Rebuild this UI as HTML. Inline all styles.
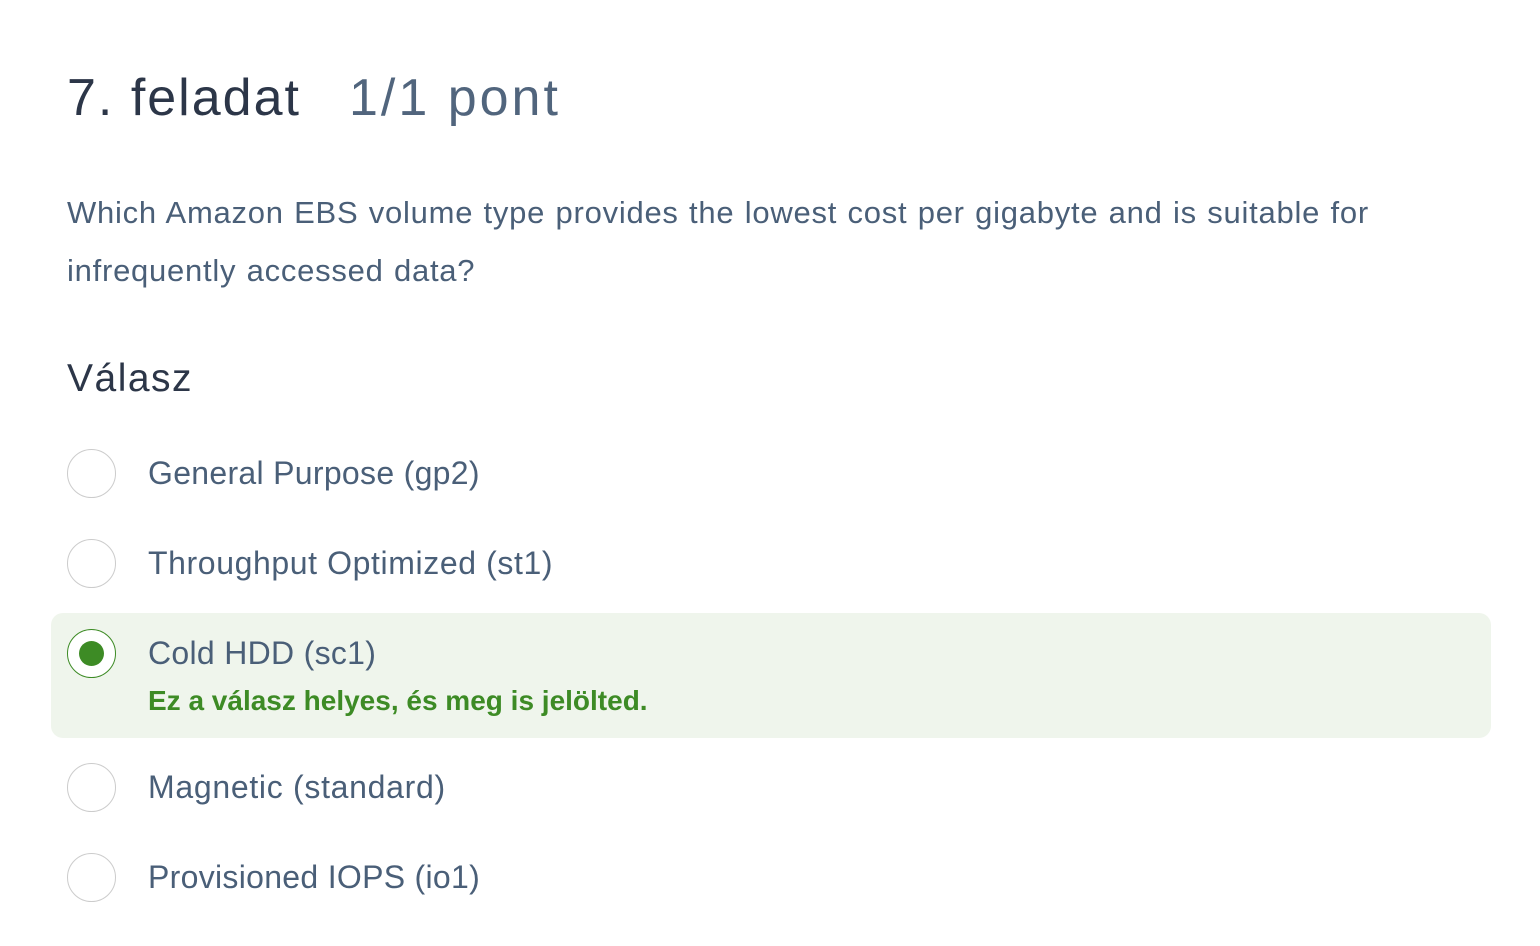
<!DOCTYPE html>
<html><head><meta charset="utf-8"><style>
body{margin:0;width:1540px;height:946px;background:#fff;font-family:"Liberation Sans",sans-serif;position:relative;overflow:hidden}
.a{position:absolute;white-space:nowrap}
h1{position:absolute;left:67px;top:68px;margin:0;font-size:52px;font-weight:normal;color:#2c3648;letter-spacing:2px}
h1 span{color:#51657d;margin-left:48px;letter-spacing:3px}
.q{left:67px;top:184px;font-size:31px;line-height:58px;color:#4a5f78;white-space:normal;width:1400px;letter-spacing:0.75px;word-spacing:1px}
.v{left:67px;top:357px;font-size:39px;color:#2c3648;letter-spacing:1.5px}
.c{position:absolute;left:67px;width:47px;height:47px;border:1.5px solid #ccc;border-radius:50%;background:#fff}
.t{position:absolute;left:148px;font-size:32px;color:#4a5f78;letter-spacing:0.3px}
.box{position:absolute;left:51px;top:613px;width:1440px;height:125px;background:#eff5ec;border-radius:12px}
</style></head><body>
<h1>7. feladat<span>1/1 pont</span></h1>
<div class="a q">Which Amazon EBS volume type provides the lowest cost per gigabyte and is suitable for infrequently accessed data?</div>
<div class="a v">Válasz</div>
<div class="c" style="top:449px"></div><div class="t" style="top:455px">General Purpose (gp2)</div>
<div class="c" style="top:539px"></div><div class="t" style="top:545px;letter-spacing:0.6px">Throughput Optimized (st1)</div>
<div class="box"></div>
<div class="c" style="top:629px;border-color:#3d8b25"><div style="position:absolute;left:11px;top:11px;width:25px;height:25px;border-radius:50%;background:#3d8b25"></div></div>
<div class="t" style="top:635px">Cold HDD (sc1)</div>
<div class="t" style="top:685px;font-size:28px;font-weight:bold;color:#3d8b25;letter-spacing:0">Ez a válasz helyes, és meg is jelölted.</div>
<div class="c" style="top:763px"></div><div class="t" style="top:769px;letter-spacing:0.7px">Magnetic (standard)</div>
<div class="c" style="top:853px"></div><div class="t" style="top:859px">Provisioned IOPS (io1)</div>
</body></html>
